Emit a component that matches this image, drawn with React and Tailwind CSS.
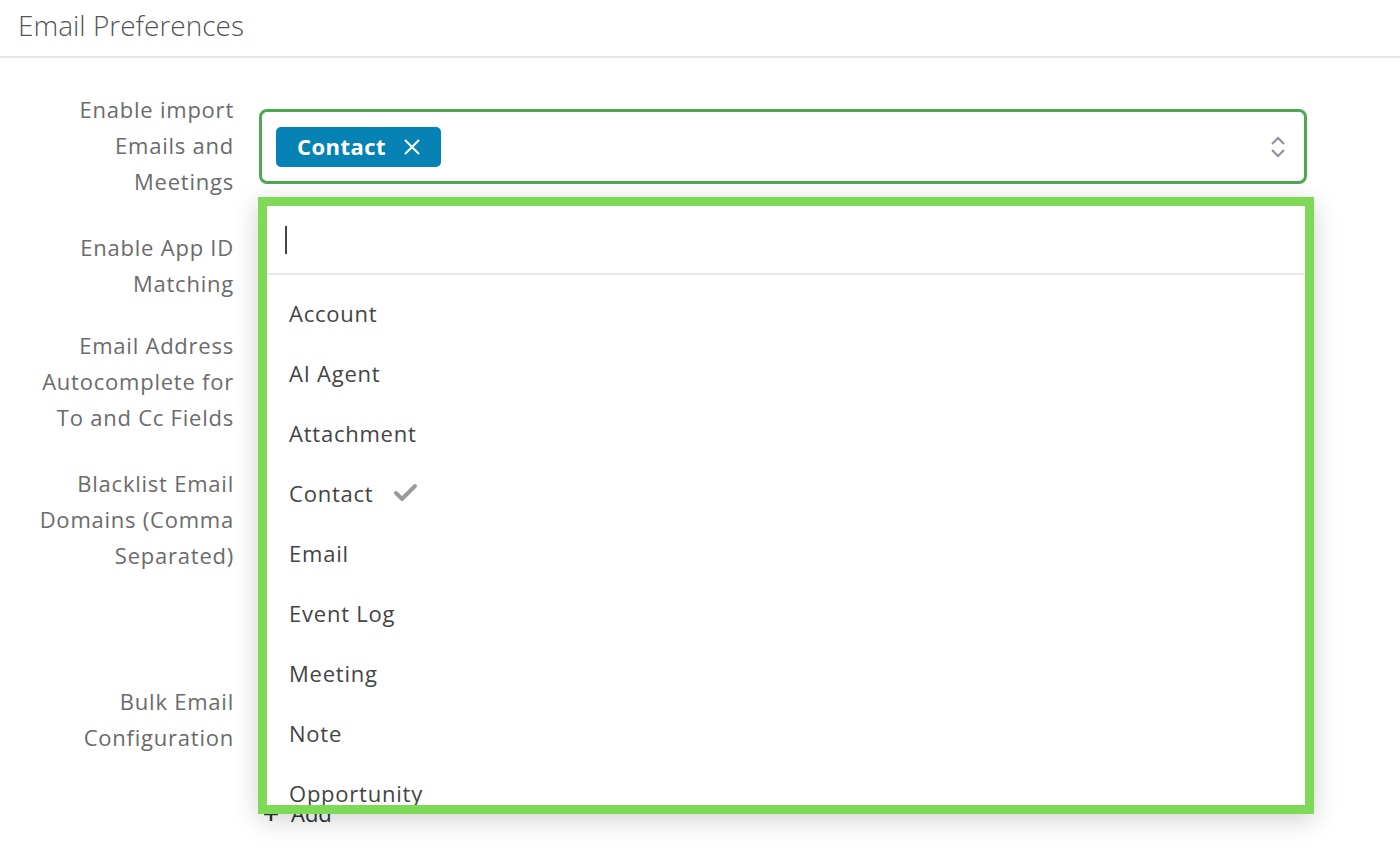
import React from "react";

const options = ["Account", "AI Agent", "Attachment", "Contact", "Email", "Event Log", "Meeting", "Note", "Opportunity", "Product"];

function Label({ children }) {
  return (
    <div className="w-[234px] shrink-0 text-right text-[22px] leading-[36px] tracking-[0.035em] text-[#6b6b6b]">{children}</div>
  );
}

export default function App() {
  return (
    <div className="relative h-[854px] w-[1400px] overflow-hidden bg-white" style={{ fontFamily: "'Open Sans', Lato, sans-serif" }}>
      <div className="flex h-[58px] items-center border-b-2 border-[#e6e6ea] pb-[7px] pl-[18px] text-[28px] font-light text-[#555]">
        Email Preferences
      </div>
      <div className="flex flex-col pt-[33px]">
        <div className="flex gap-[25px]">
          <Label>Enable import<br />Emails and<br />Meetings</Label>
          <div className="mt-[18px] flex h-[75px] w-[1048px] items-center justify-between rounded-[8px] border-[3px] border-[#4ea852] pl-[14px] pr-[18px]">
            <div className="flex h-[40px] w-[165px] items-center gap-[17px] rounded-[5px] bg-[#0782b4] pl-[21px] text-[22px] font-bold tracking-[0.02em] text-white">
              Contact
              <svg width="18" height="18" viewBox="0 0 18 18" stroke="white" strokeWidth="2" fill="none"><path d="M2 2L16 16M16 2L2 16" /></svg>
            </div>
            <svg width="16" height="24" viewBox="0 0 16 24" stroke="#8a8f99" strokeWidth="2" fill="none"><path d="M2 9L8 3L14 9M2 15L8 21L14 15" /></svg>
          </div>
        </div>
        <div className="mt-[30px] flex gap-[25px]">
          <Label>Enable App ID<br />Matching</Label>
        </div>
        <div className="mt-[26px] flex gap-[25px]">
          <Label>Email Address<br />Autocomplete for<br />To and Cc Fields</Label>
        </div>
        <div className="mt-[30px] flex gap-[25px]">
          <Label>Blacklist Email<br />Domains (Comma<br />Separated)</Label>
        </div>
        <div className="mt-[110px] flex gap-[25px]">
          <Label>Bulk Email<br />Configuration</Label>
        </div>
        <div className="mt-[42px] flex items-center gap-[12px] pl-[263px] text-[22px] text-[#2d3340]">
          <svg width="16" height="16" viewBox="0 0 16 16" stroke="#2d3340" strokeWidth="2.5" fill="none"><path d="M8 1V15M1 8H15" /></svg>
          Add
        </div>
      </div>

      <div className="absolute left-[258px] top-[197px] flex h-[617px] w-[1056px] flex-col overflow-hidden border-[9px] border-[#7ed957] bg-white shadow-[0_6px_24px_rgba(0,0,0,0.18)]">
        <div className="flex h-[69px] shrink-0 items-center border-b-2 border-[#e8e8ec] pl-[18px]">
          <div className="h-[28px] w-[2px] bg-[#444]" />
        </div>
        <div className="flex flex-col pt-[8px]">
          {options.map((o) => (
            <div key={o} className="flex h-[60px] shrink-0 items-center gap-[20px] pl-[22px] text-[22px] tracking-[0.035em] text-[#444]">
              {o}
              {o === "Contact" && (
                <svg width="25" height="20" viewBox="0 0 25 20" fill="none" stroke="#9a9a9a" strokeWidth="4" strokeLinecap="round" strokeLinejoin="round"><path d="M3 10L9 16L22 3" /></svg>
              )}
            </div>
          ))}
        </div>
      </div>
    </div>
  );
}
